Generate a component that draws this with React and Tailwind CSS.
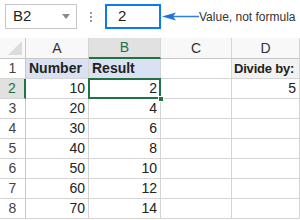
import React from "react";

const cols = [
  { key: "A", w: "w-[63px]" },
  { key: "B", w: "w-[72px]" },
  { key: "C", w: "w-[71px]" },
  { key: "D", w: "w-[68px]" },
];

const rows = [
  ["Number", "Result", "", "Divide by:"],
  ["10", "2", "", "5"],
  ["20", "4", "", ""],
  ["30", "6", "", ""],
  ["40", "8", "", ""],
  ["50", "10", "", ""],
  ["60", "12", "", ""],
  ["70", "14", "", ""],
];

function cellClass(r, c) {
  if (r === 0) {
    if (c === 0 || c === 1) return "bg-[#d9e1f2] font-bold text-left pl-[3px]";
    if (c === 3) return "bg-[#f2f2f2] font-bold text-left pl-[2px] text-[13px] tracking-[-0.2px] overflow-hidden";
    return "bg-white";
  }
  return "bg-white text-right pr-[3px]";
}

export default function App() {
  return (
    <div
      className="w-[300px] h-[220px] overflow-hidden bg-white text-[#222]"
      style={{ fontFamily: '"Liberation Sans", Arial, sans-serif' }}
    >
      {/* formula bar */}
      <div className="h-[38px] flex items-start pt-[4px] pl-[5px]">
        <div className="w-[72px] h-[25px] border border-[#c6c6c6] flex items-center justify-between pl-[7px] pr-[6px] text-[15px]">
          <span>B2</span>
          <svg width="8" height="5" viewBox="0 0 8 5">
            <path d="M0 0h8L4 5z" fill="#8a8a8a" />
          </svg>
        </div>
        <div className="w-[28px] h-[25px] flex flex-col items-center justify-center gap-[2px]">
          <span className="w-[2px] h-[2px] bg-[#9a9a9a]" />
          <span className="w-[2px] h-[2px] bg-[#9a9a9a]" />
          <span className="w-[2px] h-[2px] bg-[#9a9a9a]" />
        </div>
        <div className="w-[56px] h-[25px] border-2 border-[#0a7cf0] flex items-center pl-[11px] text-[15px]">
          2
        </div>
        <svg width="38" height="25" viewBox="0 0 38 25" className="shrink-0">
          <line x1="6" y1="12.5" x2="38" y2="12.5" stroke="#2d7fe0" strokeWidth="1.5" />
          <path d="M1 12.5 L15 8.5 L12 12.5 L15 16.5 Z" fill="#1e73e0" />
        </svg>
        <div className="h-[25px] flex items-center text-[12px] text-[#333] whitespace-nowrap">
          Value, not formula
        </div>
      </div>

      {/* column headers */}
      <div className="flex h-[21px] text-[14px] text-[#333]">
        <div className="w-[26px] shrink-0 bg-[#f8f8f8] border-r border-b border-[#c8c8c8] relative">
          <svg width="14" height="14" viewBox="0 0 14 14" className="absolute right-[3px] bottom-[3px]">
            <path d="M14 0V14H0Z" fill="#dcdcdc" />
          </svg>
        </div>
        {cols.map((c) => (
          <div
            key={c.key}
            className={`${c.w} shrink-0 flex items-center justify-center border-r border-[#d4d4d4] ${
              c.key === "B"
                ? "bg-[#e1e1e1] border-b-2 border-b-[#217346] text-[#217346]"
                : "bg-[#f8f8f8] border-b border-b-[#c8c8c8]"
            }`}
          >
            {c.key}
          </div>
        ))}
      </div>

      {/* rows */}
      {rows.map((row, r) => (
        <div key={r} className={`flex h-[20px] text-[14px] relative ${r === 1 ? "z-10" : ""}`}>
          <div
            className={`w-[26px] shrink-0 flex items-center justify-center text-[#444] border-b border-[#d4d4d4] ${
              r === 1
                ? "bg-[#e1e1e1] border-r-2 border-r-[#217346] text-[#217346]"
                : "bg-white border-r border-r-[#c8c8c8]"
            }`}
          >
            {r + 1}
          </div>
          {row.map((v, c) => (
            <div
              key={c}
              className={`${cols[c].w} shrink-0 relative leading-[19px] whitespace-nowrap border-r border-b border-[#d4d4d4] ${cellClass(r, c)}`}
            >
              {r === 1 && c === 1 && (
                <>
                  <div className="absolute -left-[1px] -top-[1px] right-[-1px] bottom-[-1px] border-2 border-[#217346]" />
                  <div className="absolute right-[-4px] bottom-[-4px] w-[6px] h-[6px] bg-[#217346] border border-white z-10" />
                </>
              )}
              <span className="relative">{v}</span>
            </div>
          ))}
        </div>
      ))}
    </div>
  );
}
